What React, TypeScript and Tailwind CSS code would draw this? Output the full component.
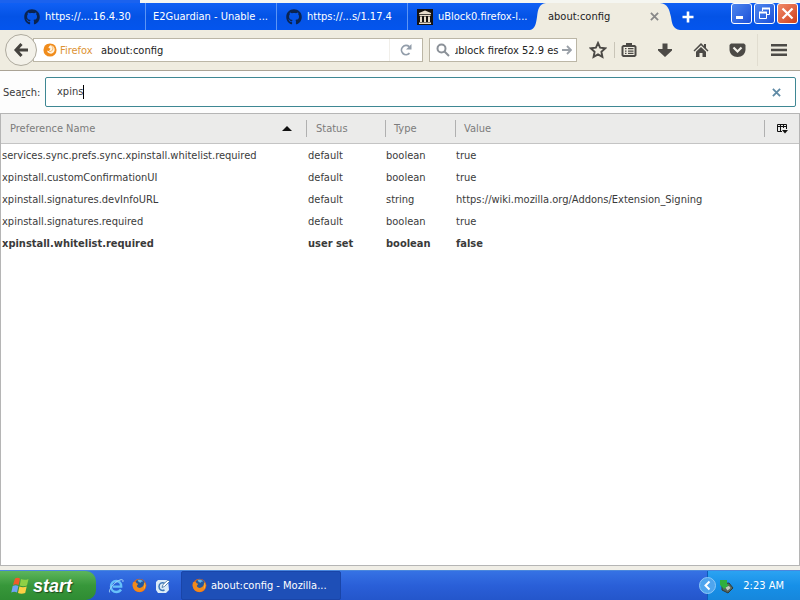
import React, { useState } from 'react';
import { FaGithub } from 'react-icons/fa';

interface Preference {
  name: string;
  status: string;
  type: string;
  value: string;
}

const preferences: Preference[] = [
  { name: 'services.sync.prefs.sync.xpinstall.whitelist.required', status: 'default', type: 'boolean', value: 'true' },
  { name: 'xpinstall.customConfirmationUI', status: 'default', type: 'boolean', value: 'true' },
  { name: 'xpinstall.signatures.devInfoURL', status: 'default', type: 'string', value: 'https://wiki.mozilla.org/Addons/Extension_Signing' },
  { name: 'xpinstall.signatures.required', status: 'default', type: 'boolean', value: 'true' },
  { name: 'xpinstall.whitelist.required', status: 'user set', type: 'boolean', value: 'false' },
];

const ArchiveIcon = () => (
  <svg viewBox="0 0 16 16" className="h-4 w-4 shrink-0">
    <rect width="16" height="16" fill="#15110f" />
    <path d="M8 1.5 14 4v1.2H2V4zM2.5 6h11v1h-11zM3 7.5h2V13H3zM7 7.5h2V13H7zM11 7.5h2V13h-2zM2 13.5h12V15H2z" fill="#e8dccb" />
  </svg>
);

const FirefoxLogo = () => (
  <svg viewBox="0 0 16 16" className="h-[15px] w-[15px] shrink-0">
    <circle cx="8" cy="8" r="7.3" fill="#e2641a" />
    <circle cx="8.5" cy="7" r="5.6" fill="#23589f" />
    <path d="M6 2.4c2-.9 4.600-.4 6 1.400-1.500-.4-2.200.2-2.600 1.200C8 5 6.500 4 6 2.400z" fill="#63b3e8" />
    <path d="M1 4.500C2 5 2.600 3.600 4 4.200c.6.900 1.200 1.700 2.600 2-.4 1.400-1.600 1.300-1.300 2.600.8 1.800 3.600 2.400 5.500.9 1.800-1.400 2.200-3.400 1.900-5.200C14.600 6 15 9 13.400 11.800 11.500 15 6.500 16 3.300 13.400.8 11.300.1 7.500 1 4.500z" fill="#f08a1d" />
    <path d="M13 4c1.900 2.600 1.500 6.200-.6 8.300 1.200-2.700 1.400-5.400.6-8.300z" fill="#fbd54a" />
  </svg>
);

const IdentityLogo = () => (
  <svg viewBox="0 0 16 16" className="h-[14px] w-[14px] shrink-0">
    <circle cx="8" cy="8" r="7.500" fill="#f08c1c" />
    <path d="M8.500 2.500c3.500.3 5.300 3 4.800 5.800-.5 2.700-3 4.200-5.300 3.800-2-.3-3.400-1.800-3.200-3.400.9.600 1.800.5 2.500-.2.700-.6.300-1.200 1.300-2-1-.3-1.600-.8-2.400-.7.300-1.500 1.100-2.500 2.300-3.300z" fill="#fff3df" />
    <path d="M9.500 3c2 1.200 2.400 3.400 1.200 5.200C9.800 9.600 8.300 10 7 9.600" fill="none" stroke="#f5a94e" />
  </svg>
);

const CloseIcon = () => (
  <svg viewBox="0 0 10 10" className="h-[9px] w-[9px]" fill="none" stroke="currentColor" strokeWidth="2">
    <path d="M1 1l8 8M9 1L1 9" />
  </svg>
);

const TabBar = () => (
  <div className="flex h-[27px] items-stretch bg-linear-to-b from-[#1060f4] via-[#0453e6] to-[#0455ee] pl-[15px] text-white">
    <button type="button" className="flex min-w-0 basis-[131px] items-center gap-[5px] border-r border-[#5d95f5] pl-[9px] text-left whitespace-pre">
      <FaGithub className="h-4 w-4 shrink-0 text-[#0a2350]" />
      <span>https://....16.4.30</span>
    </button>
    <button type="button" className="flex min-w-0 basis-[131px] items-center border-r border-[#5d95f5] pl-[7px] text-left whitespace-pre">
      <span>E2Guardian - Unable ...</span>
    </button>
    <button type="button" className="flex min-w-0 basis-[131px] items-center gap-[5px] border-r border-[#5d95f5] pl-[9px] text-left whitespace-pre">
      <FaGithub className="h-4 w-4 shrink-0 text-[#0a2350]" />
      <span>https://...s/1.17.4</span>
    </button>
    <button type="button" className="flex min-w-0 basis-[122px] items-center gap-[5px] pl-[9px] text-left whitespace-pre">
      <ArchiveIcon />
      <span>uBlock0.firefox-l...</span>
    </button>
    <svg viewBox="0 0 16 27" className="h-[27px] w-4 shrink-0" fill="#efece0">
      <path d="M0 27C5 26 6 21 7 14 8 6 9 1 16 0V27z" />
    </svg>
    <div className="flex w-[114px] shrink-0 items-center justify-between bg-[#efece0] pr-[1px] pl-[2px] text-[#222]">
      <button type="button">about:config</button>
      <button type="button" aria-label="Close tab" className="text-[#888]"><CloseIcon /></button>
    </div>
    <svg viewBox="0 0 20 27" className="h-[27px] w-5 shrink-0" fill="#efece0">
      <path d="M20 27C13 26 12 21 11 14 9 6 8 1 0 0V27z" />
    </svg>
    <button type="button" aria-label="New tab" className="flex w-4 items-center justify-center">
      <svg viewBox="0 0 12 12" className="h-3 w-3" stroke="#fff" strokeWidth="2.600"><path d="M6 0.500v11M.5 6h11" /></svg>
    </button>
    <div className="ml-auto flex shrink-0 gap-[2px] pr-[2px]">
      <button type="button" aria-label="Minimize" className="h-[21px] w-[21px] rounded-[3px] border border-white bg-linear-to-br from-[#4f86ee] to-[#1c4fd8]">
        <svg viewBox="0 0 19 19" className="block"><path d="M4 12h7v3H4z" fill="#fff" /></svg>
      </button>
      <button type="button" aria-label="Restore" className="h-[21px] w-[21px] rounded-[3px] border border-white bg-linear-to-br from-[#4f86ee] to-[#1c4fd8]">
        <svg viewBox="0 0 19 19" className="block" fill="none" stroke="#fff">
          <path d="M7.500 7V4.500h7v6H12" /><path d="M7 4.500h8" strokeWidth="2" /><path d="M4.500 8.500h7v6h-7z" /><path d="M4 8.500h8" strokeWidth="2" />
        </svg>
      </button>
      <button type="button" aria-label="Close" className="h-[21px] w-[21px] rounded-[3px] border border-white bg-linear-to-br from-[#f08a68] to-[#cf3d14]">
        <svg viewBox="0 0 19 19" className="block" stroke="#fff" strokeWidth="2.200"><path d="M4.500 4.500l10 10M14.500 4.500l-10 10" /></svg>
      </button>
    </div>
  </div>
);

const NavBar = () => (
  <div className="flex h-[41px] items-center border-b border-[#aaa395] bg-[#efece0] pl-[5px] text-[#4c4a46]">
    <button type="button" aria-label="Back" className="z-10 flex h-8 w-8 shrink-0 items-center justify-center rounded-full border border-[#aeaa9e] bg-[#f3f1e9]">
      <svg viewBox="0 0 16 16" className="h-4 w-4" fill="none" stroke="#45433f" strokeWidth="3"><path d="M8.500 2L3 8l5.500 6M3 8h12" /></svg>
    </button>
    <div className="-ml-1 flex h-6 min-w-0 flex-1 items-center border border-[#bbb6a6] bg-white pl-[9px]">
      <IdentityLogo />
      <span className="ml-[3px] w-[41px] pt-px text-[#dd9335]">Firefox</span>
      <input aria-label="Address" defaultValue="about:config" className="min-w-0 flex-1 bg-transparent pt-px text-[#222] outline-none" />
      <button type="button" aria-label="Reload" className="flex h-full w-[33px] items-center justify-center border-l border-[#f1efea]">
        <svg viewBox="0 0 12 12" className="h-3 w-3" fill="none" stroke="#929daa" strokeWidth="1.800">
          <path d="M9.500 9.200A4.600 4.600 0 1 1 9.200 2.700" /><path d="M11.500 0v5.500H6z" fill="#929daa" stroke="none" />
        </svg>
      </button>
    </div>
    <div className="ml-[6px] flex h-6 w-[148px] shrink-0 items-center border border-[#bbb6a6] bg-white pr-1 pl-[6px]">
      <svg viewBox="0 0 14 14" className="h-[14px] w-[14px] shrink-0" fill="none" stroke="#8b9198" strokeWidth="2"><circle cx="5.500" cy="5.500" r="4" /><path d="M8.500 8.500l4.500 4.500" /></svg>
      <input aria-label="Search the web" defaultValue="ublock firefox 52.9 es" className="ml-[5px] min-w-0 flex-1 pt-px indent-[-3px] text-[#222] outline-none" />
      <button type="button" aria-label="Go">
        <svg viewBox="0 0 10 10" className="h-[10px] w-[10px]" fill="none" stroke="#9aa0a8" strokeWidth="1.800"><path d="M0 5h8.500M5 1l4 4-4 4" /></svg>
      </button>
    </div>
    <div className="ml-3 flex shrink-0 items-center">
      <button type="button" aria-label="Bookmark this page" className="flex w-[25px] justify-start">
        <svg viewBox="0 0 18 18" className="h-[18px] w-[18px]" fill="none" stroke="currentColor" strokeWidth="1.900"><path d="M9 2l2.100 4.700 5.100.6-3.800 3.500 1 5L9 13.300l-4.400 2.500 1-5L1.800 7.300l5.100-.6z" /></svg>
      </button>
      <button type="button" aria-label="Bookmarks" className="flex w-[43px] border-l border-[#c9c5b8] pl-[6px]">
        <svg viewBox="0 0 16 16" className="h-4 w-4" fill="currentColor"><path fillRule="evenodd" d="M5 3V1h6v2h3l1.500 1.500v9L14 15H2L.5 13.500v-9L2 3zM2.500 5v8h11V5zM4 6h1.500v1.300H4zm3 0h5.500v1.300H7zM4 8.400h1.500v1.300H4zm3 0h5.500v1.300H7zM4 10.800h1.500v1.300H4zm3 0h5.500v1.300H7z" /></svg>
      </button>
      <button type="button" aria-label="Downloads" className="flex w-9 justify-start">
        <svg viewBox="0 0 16 16" className="h-4 w-4" fill="currentColor"><path d="M5.500 1.500h5V7H15v1.500L8 15 1 8.500V7h4.500z" /></svg>
      </button>
      <button type="button" aria-label="Home" className="flex w-9 justify-start">
        <svg viewBox="0 0 16 16" className="h-4 w-4" fill="currentColor"><path d="M8 1l3 3V2h2v4l2.500 2.500-1 1L8 3.300 1.500 9.500l-1-1z" /><path d="M8 5l5 4.700V15h-3.500v-4h-3v4H3V9.700z" /></svg>
      </button>
      <button type="button" aria-label="Save to Pocket" className="flex w-7 justify-start">
        <svg viewBox="0 0 17 16" className="h-4 w-[17px]"><path d="M2 1.500h13L16.500 3v4.500C16.500 12 13 15 8.500 15S.5 12 .5 7.500V3z" fill="currentColor" /><path d="M4.500 5.500l4 4 4-4" fill="none" stroke="#f3f1e9" strokeWidth="2.200" /></svg>
      </button>
      <button type="button" aria-label="Open menu" className="flex h-8 w-[43px] items-center border-l border-[#e1ddd0] pl-[13px]">
        <svg viewBox="0 0 16 14" className="h-[14px] w-4" fill="currentColor"><path d="M0 1h16v2.600H0zM0 5.700h16v2.600H0zM0 10.400h16V13H0z" /></svg>
      </button>
    </div>
  </div>
);

const Taskbar = () => (
  <footer className="flex h-[30px] shrink-0 items-stretch border-t border-[#4a87dd] bg-linear-to-b from-[#3672e4] via-[#2a5fd8] to-[#2456cb] text-white">
    <button type="button" className="flex w-24 shrink-0 items-center gap-1 rounded-r-[10px] bg-linear-to-b from-[#5cb55c] via-[#37973a] to-[#2f8c33] pl-[11px] font-['Liberation_Sans',sans-serif] text-[18px] font-bold italic [text-shadow:1px_1px_1px_#1c4a1c]">
      <svg viewBox="0 0 18 18" className="h-[18px] w-[18px]">
        <path d="M4 1.500C6 .5 7.500.8 9 1.500L7.600 8C5.800 7 4 7 2 8z" fill="#ef5b2b" />
        <path d="M10 2c2 1 4.500 1.200 7.500 0L16 8.500c-2.500 1-5 .9-7.300-.1z" fill="#8fd045" />
        <path d="M1.700 9c2-1 3.800-1 5.700 0L6 15.500c-2-1-3.600-1-5.700 0z" fill="#6ea4f5" />
        <path d="M8.400 9.500c2.200 1 4.700 1 7.300.1L14.200 16c-2.700 1-5.200.9-7.200-.1z" fill="#fcd045" />
      </svg>
      start
    </button>
    <div className="ml-3 flex items-center gap-2">
      <button type="button" aria-label="Internet Explorer">
        <svg viewBox="0 0 16 16" className="h-4 w-4" fill="none"><path d="M13 11.500c-1 1.600-2.600 2.500-4.600 2.500C5.200 14 3 11.800 3 8.500S5.200 3 8.200 3 13.400 5.200 13.200 8.600H5" stroke="#67c1fa" strokeWidth="2.400" /><path d="M2 14.500C-.5 13 6 4 12 2c3-1 3.500.5 2.700 2" stroke="#a9d8f8" /></svg>
      </button>
      <button type="button" aria-label="Firefox"><FirefoxLogo /></button>
      <button type="button" aria-label="Show desktop">
        <svg viewBox="0 0 16 16" className="h-4 w-4"><path d="M3 2h10l1 10-3 3H3l-2-3V4z" fill="#dcecf8" /><path d="M10 5.500C7 3.500 4 5.500 4 8.500s2.500 4.800 5.500 3.500" fill="none" stroke="#3d78b8" strokeWidth="1.500" /><path d="M7 9.500l1-3 5-4.500 1.500 1.500-5 5z" fill="#fff" stroke="#396d9e" strokeWidth=".8" /></svg>
      </button>
    </div>
    <button type="button" className="ml-[10px] flex w-40 items-center gap-1 rounded-[2px] border border-[#1a45a8] bg-[#1e4fb7] pl-[10px] whitespace-nowrap">
      <FirefoxLogo />
      <span>about:config - Mozilla...</span>
    </button>
    <div className="ml-auto flex w-[93px] shrink-0 items-center border-l border-[#0d5cb8] bg-linear-to-b from-[#2ba3f2] via-[#1790e8] to-[#1687dc]">
      <button type="button" aria-label="Show hidden icons" className="-ml-[9px]">
        <svg viewBox="0 0 17 17" className="h-[17px] w-[17px]"><circle cx="8.500" cy="8.500" r="8" fill="#4fa5ee" stroke="#8dc9f7" /><path d="M10.500 4.500l-4 4 4 4" fill="none" stroke="#fff" strokeWidth="2" /></svg>
      </button>
      <svg viewBox="0 0 16 16" className="ml-[2px] h-4 w-4">
        <path d="M4 6l7-1 4 5-5 5-6-3z" fill="#55645c" stroke="#303c36" /><path d="M7 9l4-1 1.500 2-3 2.500z" fill="#c2cbc0" />
        <path d="M2 2h7v4l2 1-5 4-4-4z" fill="#2fae3e" />
      </svg>
      <time className="ml-auto pr-[16px]">2:23 AM</time>
    </div>
  </footer>
);

export default function App() {
  const [query, setQuery] = useState('xpins');
  const rows = preferences.filter((pref) => pref.name.toLowerCase().includes(query.toLowerCase()));

  return (
    <div className="flex min-h-screen flex-col bg-[#fdfdfd] font-['DejaVu_Sans_Condensed','DejaVu_Sans',sans-serif] text-[11px] leading-4 text-[#3a3a3a]">
      <header>
        <div className="flex h-[3px] bg-[#f5f6f1]"><div className="w-[140px] bg-[#1b62ee]" /></div>
        <TabBar />
        <NavBar />
      </header>

      <main className="flex flex-1 flex-col">
        <div className="flex h-[42px] items-center pr-1 pl-[3px]">
          <label htmlFor="filter" className="w-[42px] shrink-0 pt-[2px]">Sea<u>r</u>ch:</label>
          <div className="flex h-[30px] flex-1 items-center rounded-[2px] border border-[#3e8793] bg-white pr-[14px] pl-[11px]">
            <input
              id="filter"
              value={query}
              onChange={(e) => setQuery(e.target.value)}
              className="field-sizing-content outline-none"
            />
            <span className="h-[14px] w-px bg-black" />
            <button type="button" aria-label="Clear" onClick={() => setQuery('')} className="ml-auto text-[#5f8aa5]"><CloseIcon /></button>
          </div>
        </div>

        <div className="flex-1 border border-[#b5b5b5] bg-white">
          <table className="w-full table-fixed border-collapse text-left whitespace-nowrap">
            <colgroup>
              <col className="w-[306px]" />
              <col className="w-[79px]" />
              <col className="w-[70px]" />
              <col />
              <col className="w-[34px]" />
            </colgroup>
            <thead className="bg-[#ebebea] text-[#7c7c7c]">
              <tr className="h-[29px] border-b border-[#c4c4c4]">
                <th className="p-0 font-normal">
                  <div className="flex items-center justify-between border-r border-[#b0b0b0] pt-px pr-[14px] pl-[9px]">
                    Preference Name
                    <svg viewBox="0 0 10 5" className="h-[5px] w-[10px]"><path d="M5 0l5 5H0z" fill="#111" /></svg>
                  </div>
                </th>
                <th className="p-0 font-normal"><div className="border-r border-[#b0b0b0] pt-px pl-[9px]">Status</div></th>
                <th className="p-0 font-normal"><div className="border-r border-[#b0b0b0] pt-px pl-[8px]">Type</div></th>
                <th className="p-0 font-normal"><div className="border-r border-[#b0b0b0] pt-px pl-[8px]">Value</div></th>
                <th className="p-0 pl-[11px]">
                  <button type="button" aria-label="Select columns to display" className="block">
                    <svg viewBox="0 0 12 11" className="h-[11px] w-3" fill="none" stroke="#111"><path d="M6 8.500H1.500v-7h9V6M1 3.500h10M4.500 1v7M7.500 1v4" /><path d="M6 7h6L9 10.500z" fill="#111" stroke="none" /></svg>
                  </button>
                </th>
              </tr>
            </thead>
            <tbody>
              <tr className="h-[2px]"><td colSpan={5} className="p-0" /></tr>
              {rows.map((pref) => (
                <tr key={pref.name} className={pref.status === 'user set' ? 'h-[22px] font-bold' : 'h-[22px]'}>
                  <td className="p-0 pl-px">{pref.name}</td>
                  <td className="p-0 pl-px">{pref.status}</td>
                  <td className="p-0">{pref.type}</td>
                  <td className="p-0" colSpan={2}>{pref.value}</td>
                </tr>
              ))}
            </tbody>
          </table>
        </div>
      </main>

      <div className="h-1 bg-[#f0eee6]" />
      <Taskbar />
    </div>
  );
}
